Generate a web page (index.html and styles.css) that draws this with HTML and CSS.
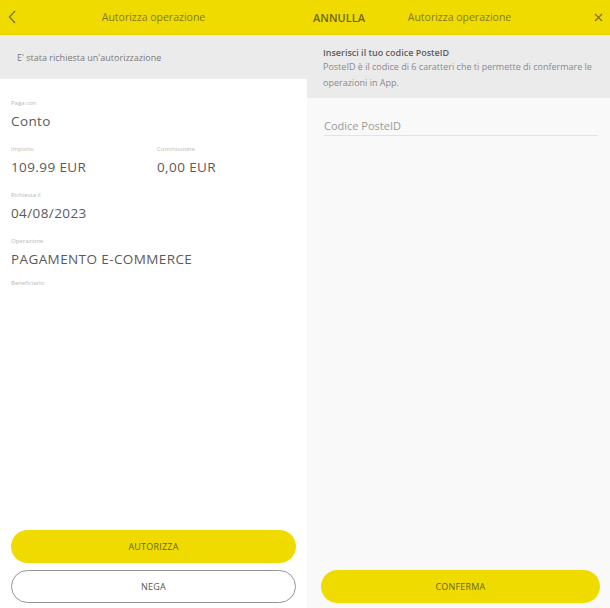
FILE: index.html
```html
<!DOCTYPE html>
<html lang="it">
<head>
  <meta charset="UTF-8" />
  <meta name="viewport" content="width=device-width, initial-scale=1.0" />
  <title>Autorizza operazione</title>
  <link rel="stylesheet" href="styles.css">
</head>
<body>
  <div class="screens">

    <!-- Left screen: request details -->
    <section class="screen screen-left">
      <header class="topbar">
        <span class="topbar-side">
          <svg class="back-icon" width="8" height="14" viewBox="0 0 8 14">
            <path d="M7 1 L1.5 7 L7 13" fill="none" stroke="#7d7320" stroke-width="1.3" />
          </svg>
        </span>
        <span class="topbar-title">Autorizza operazione</span>
        <span class="topbar-side"></span>
      </header>

      <div class="notice">E' stata richiesta un'autorizzazione</div>

      <div class="details">
        <div class="field">
          <div class="field-label">Paga con</div>
          <div class="field-value">Conto</div>
        </div>
        <div class="field-row">
          <div class="field">
            <div class="field-label">Importo</div>
            <div class="field-value">109.99 EUR</div>
          </div>
          <div class="field">
            <div class="field-label">Commissione</div>
            <div class="field-value">0,00 EUR</div>
          </div>
        </div>
        <div class="field">
          <div class="field-label">Richiesta il</div>
          <div class="field-value">04/08/2023</div>
        </div>
        <div class="field field-tight">
          <div class="field-label">Operazione</div>
          <div class="field-value">PAGAMENTO E-COMMERCE</div>
        </div>
        <div class="field">
          <div class="field-label">Beneficiario</div>
        </div>
      </div>

      <div class="actions">
        <button class="btn btn-yellow">AUTORIZZA</button>
        <button class="btn btn-outline">NEGA</button>
      </div>
    </section>

    <!-- Right screen: PosteID code -->
    <section class="screen screen-right">
      <header class="topbar">
        <span class="topbar-side topbar-cancel">ANNULLA</span>
        <span class="topbar-title">Autorizza operazione</span>
        <span class="topbar-side topbar-close">
          <svg width="9" height="9" viewBox="0 0 9 9">
            <path d="M1 1 L8 8 M8 1 L1 8" stroke="#7d7320" stroke-width="1.2" />
          </svg>
        </span>
      </header>

      <div class="notice notice-tall">
        <div class="notice-title">Inserisci il tuo codice PosteID</div>
        <div class="notice-text">PosteID è il codice di 6 caratteri che ti permette di confermare le operazioni in App.</div>
      </div>

      <div class="code-area">
        <div class="code-input">Codice PosteID</div>
      </div>

      <div class="actions">
        <button class="btn btn-yellow">CONFERMA</button>
      </div>
    </section>

  </div>
</body>
</html>
```

FILE: styles.css
```css
body {
  margin: 0;
  padding: 0;
  font-family: 'Open Sans', sans-serif;
  background-color: #ffffff;
}

.screens {
  display: flex;
  width: 610px;
  height: 608px;
}

.screen {
  display: flex;
  flex-direction: column;
  height: 608px;
}

.screen-left {
  width: 307px;
  background-color: #ffffff;
}

.screen-right {
  width: 303px;
  background-color: #f9f9f9;
}

.topbar {
  display: flex;
  align-items: center;
  height: 35px;
  background-color: #efdb00;
  border-bottom: 1px solid #e6d200;
  box-sizing: border-box;
  padding: 0 6px;
}

.topbar-side {
  width: 50px;
  display: flex;
  align-items: center;
}

.topbar-title {
  flex: 1;
  text-align: center;
  font-size: 10.5px;
  color: #857a2a;
}

.screen-right .topbar-title {
  padding-left: 3px;
}

.back-icon {
  margin-left: 2px;
}

.topbar-cancel {
  font-size: 11px;
  font-weight: 600;
  color: #6f6510;
}

.topbar-close {
  justify-content: flex-end;
  padding-right: 1px;
}

.notice {
  background-color: #ebebeb;
  height: 44px;
  padding-left: 17px;
  display: flex;
  align-items: center;
  font-size: 9px;
  color: #7a7a7a;
}

.notice-tall {
  height: 63px;
  padding: 12px 10px 0 16px;
  box-sizing: border-box;
  display: block;
}

.notice-title {
  font-weight: 600;
  color: #5e5e5e;
  font-size: 9px;
  line-height: 12px;
}

.notice-text {
  color: #8a8a8a;
  font-size: 9px;
  line-height: 16px;
}

.details {
  flex: 1;
  padding: 19px 11px 0;
}

.field {
  margin-bottom: 10px;
}

.field-tight {
  margin-bottom: 6px;
}

.field-row {
  display: flex;
}

.field-row .field {
  flex: 0 0 146px;
}

.field-label {
  font-size: 6px;
  color: #b8b8b8;
  line-height: 10px;
}

.field-value {
  font-size: 13.5px;
  color: #5a5a5a;
  line-height: 26px;
  letter-spacing: 0.4px;
}

.code-area {
  flex: 1;
  padding: 20px 12px 0 17px;
}

.code-input {
  font-size: 11px;
  color: #9a9a9a;
  padding: 0 0 2px 0;
  border-bottom: 1px solid #e3e3e3;
}

.actions {
  display: flex;
  flex-direction: column;
  gap: 7px;
  padding: 0 11px 5px;
}

.screen-right .actions {
  padding: 0 10px 5px 14px;
}

.btn {
  height: 33px;
  border-radius: 17px;
  font-family: 'Open Sans', sans-serif;
  font-size: 9px;
  letter-spacing: 0.2px;
  color: #555;
  cursor: pointer;
}

.btn-yellow {
  background-color: #efdb00;
  border: none;
  color: #6a6220;
}

.btn-outline {
  background-color: #ffffff;
  border: 1px solid #959595;
}
```
